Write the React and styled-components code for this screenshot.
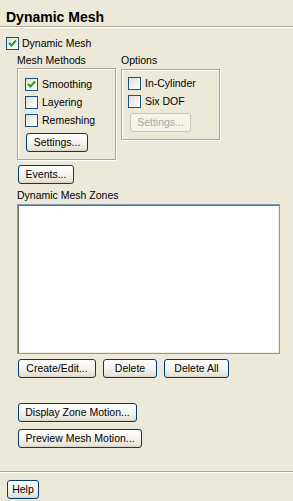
import React from 'react'
import styled, { createGlobalStyle } from 'styled-components'

const GlobalStyle = createGlobalStyle`
  html, body {
    margin: 0;
    padding: 0;
    background: #ece9d8;
  }
  body {
    font-family: "Liberation Sans", Arial, sans-serif;
    font-size: 10.5px;
    color: #000;
  }
`

const Panel = styled.div`
  width: 293px;
  height: 501px;
  display: flex;
  flex-direction: column;
  background: #ece9d8;
  box-sizing: border-box;
  overflow: hidden;
`

const Title = styled.div`
  height: 27px;
  box-sizing: border-box;
  padding: 9px 0 0 6px;
  font-size: 14px;
  font-weight: bold;
  line-height: 16px;
  border-bottom: 1px solid #aca899;
  box-shadow: 0 1px 0 #ffffff;
`

const Body = styled.div`
  flex: 1;
  display: flex;
  flex-direction: column;
  padding: 10px 0 0 6px;
`

const CheckRow = styled.label`
  display: flex;
  align-items: center;
  gap: ${p => p.$gap || 4}px;
  height: 13px;
  line-height: 13px;
  color: ${p => (p.$disabled ? '#aca899' : '#000')};
`

const Box = styled.span`
  width: 11px;
  height: 11px;
  border: 1px solid #1c5180;
  background: linear-gradient(135deg, #dcdcd7 0%, #f4f4f2 60%, #ffffff 100%);
  display: flex;
  align-items: center;
  justify-content: center;
  flex-shrink: 0;
`

const Indented = styled.div`
  display: flex;
  flex-direction: column;
  align-items: flex-start;
  padding-left: 11px;
`

const Label = styled.div`
  height: 13px;
  line-height: 13px;
  margin-top: ${p => p.$top || 0}px;
`

const Columns = styled.div`
  display: flex;
  gap: 5px;
  align-items: flex-start;
`

const Column = styled.div`
  display: flex;
  flex-direction: column;
  width: ${p => p.$w}px;
`

const Group = styled.div`
  margin-top: ${p => p.$top || 1}px;
  border: 1px solid #aca899;
  box-shadow: 1px 1px 0 #ffffff, inset 1px 1px 0 #ffffff;
  padding: ${p => p.$pad};
  display: flex;
  flex-direction: column;
  gap: 5px;
  align-items: flex-start;
`

const Button = styled.button`
  display: block;
  width: ${p => p.$w}px;
  height: 19px;
  margin-left: ${p => p.$left || 0}px;
  margin-top: ${p => p.$top || 0}px;
  padding: 0;
  box-sizing: border-box;
  font-family: "Liberation Sans", Arial, sans-serif;
  font-size: 10.5px;
  color: ${p => (p.disabled ? '#aca899' : '#000')};
  border: 1px solid ${p => (p.disabled ? '#c9c7ba' : '#003c74')};
  border-radius: 3px;
  background: ${p =>
    p.disabled
      ? '#f5f4ea'
      : 'linear-gradient(180deg, #ffffff 0%, #f4f3ee 50%, #e6e3d6 90%, #d6d0c5 100%)'};
  text-align: center;
  line-height: 17px;
  flex-shrink: 0;
`

const ListBox = styled.div`
  margin-top: 2px;
  margin-left: 11px;
  width: 263px;
  height: 150px;
  box-sizing: border-box;
  border: 1px solid #7f9db9;
  background: #ffffff;
  box-shadow: inset 1px 1px 0 #716f64, inset -1px -1px 0 #f1efe2;
`

const ButtonRow = styled.div`
  display: flex;
  gap: 7px;
  margin: 5px 0 0 12px;
`

const Stack = styled.div`
  display: flex;
  flex-direction: column;
  gap: 7px;
  margin: 25px 0 0 12px;
`

const Footer = styled.div`
  display: flex;
  border-top: 1px solid #aca899;
  box-shadow: inset 0 1px 0 #ffffff;
  padding: 8px 0 2px 7px;
`

const Tick = () => (
  <svg width="9" height="9" viewBox="0 0 9 9">
    <path d="M1 4 L3.5 6.5 L8 1.5" fill="none" stroke="#21a121" strokeWidth="2" />
  </svg>
)

const Check = ({ checked, children, gap, disabled }) => (
  <CheckRow $gap={gap} $disabled={disabled}>
    <Box>{checked && <Tick />}</Box>
    {children}
  </CheckRow>
)

export default function App() {
  return (
    <Panel>
      <GlobalStyle />
      <Title>Dynamic Mesh</Title>
      <Body>
        <Check checked gap={3}>Dynamic Mesh</Check>
        <Indented>
          <Columns>
            <Column $w={99}>
              <Label $top={4}>Mesh Methods</Label>
              <Group $pad="9px 8px 7px 7px">
                <Check checked>Smoothing</Check>
                <Check>Layering</Check>
                <Check>Remeshing</Check>
                <Button $w={62} $left={1} $top={1}>Settings...</Button>
              </Group>
            </Column>
            <Column $w={99}>
              <Label $top={4}>Options</Label>
              <Group $top={2} $pad="7px 6px 7px 6px">
                <Check>In-Cylinder</Check>
                <Check>Six DOF</Check>
                <Button $w={61} $left={2} disabled>Settings...</Button>
              </Group>
            </Column>
          </Columns>
          <Button $w={56} $left={1} $top={5}>Events...</Button>
          <Label $top={5}>Dynamic Mesh Zones</Label>
        </Indented>
        <ListBox />
        <ButtonRow>
          <Button $w={78}>Create/Edit...</Button>
          <Button $w={54}>Delete</Button>
          <Button $w={65}>Delete All</Button>
        </ButtonRow>
        <Stack>
          <Button $w={119}>Display Zone Motion...</Button>
          <Button $w={124}>Preview Mesh Motion...</Button>
        </Stack>
      </Body>
      <Footer>
        <Button $w={32}>Help</Button>
      </Footer>
    </Panel>
  )
}
